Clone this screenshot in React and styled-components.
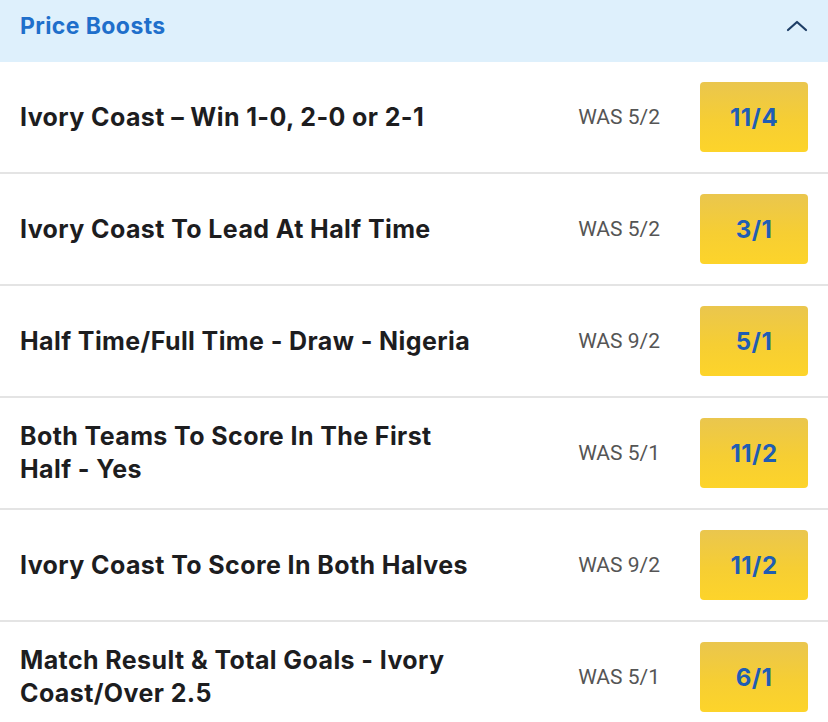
import React from "react";
import styled, { createGlobalStyle } from "styled-components";

const Global = createGlobalStyle`
  html, body { margin: 0; padding: 0; background: #ffffff; }
  body { font-family: Inter, "Noto Sans", sans-serif; -webkit-font-smoothing: antialiased; }
`;

const Panel = styled.section`
  width: 828px;
  background: #ffffff;
`;

const Header = styled.header`
  display: flex;
  align-items: center;
  justify-content: space-between;
  height: 62px;
  box-sizing: border-box;
  padding: 0 20px 10px 20px;
  background: #def0fc;
`;

const Title = styled.h2`
  margin: 0;
  font-family: Inter, sans-serif;
  font-weight: 700;
  font-size: 23px;
  line-height: 32px;
  color: #1f6fcb;
  letter-spacing: 0.4px;
`;

const Chevron = styled.svg`
  width: 22px;
  height: 14px;
`;

const Row = styled.div`
  display: flex;
  align-items: center;
  height: 112px;
  box-sizing: border-box;
  padding: 0 20px;
  border-bottom: 2px solid #e4e4e4;
`;

const Market = styled.div`
  flex: 1;
  min-width: 0;
`;

const MarketName = styled.div`
  max-width: 465px;
  font-family: Inter, sans-serif;
  font-weight: 700;
  font-size: 25px;
  line-height: 33px;
  color: #1d1d1f;
  letter-spacing: 0.4px;
`;

const Was = styled.div`
  font-family: Roboto, Inter, sans-serif;
  font-size: 21px;
  color: #555555;
  margin-right: 40px;
  white-space: nowrap;
`;

const Odds = styled.button`
  width: 108px;
  height: 70px;
  border: none;
  border-radius: 4px;
  background: linear-gradient(180deg, #eac64e 0%, #f6ce33 55%, #fdd42a 100%);
  font-family: Inter, sans-serif;
  font-weight: 700;
  font-size: 24px;
  color: #1f5db4;
  letter-spacing: 0.5px;
  padding: 0;
  cursor: pointer;
`;

const boosts = [
  { name: "Ivory Coast – Win 1-0, 2-0 or 2-1", was: "5/2", odds: "11/4" },
  { name: "Ivory Coast To Lead At Half Time", was: "5/2", odds: "3/1" },
  { name: "Half Time/Full Time - Draw - Nigeria", was: "9/2", odds: "5/1" },
  { name: "Both Teams To Score In The First Half - Yes", was: "5/1", odds: "11/2" },
  { name: "Ivory Coast To Score In Both Halves", was: "9/2", odds: "11/2" },
  { name: "Match Result & Total Goals - Ivory Coast/Over 2.5", was: "5/1", odds: "6/1" },
];

export default function App() {
  return (
    <>
      <Global />
      <Panel>
        <Header>
          <Title>Price Boosts</Title>
          <Chevron viewBox="0 0 22 14" fill="none">
            <path d="M2 11 L11 3 L20 11" stroke="#1e3e66" strokeWidth="2.2" strokeLinecap="round" strokeLinejoin="round" />
          </Chevron>
        </Header>
        {boosts.map((b) => (
          <Row key={b.name}>
            <Market>
              <MarketName>{b.name}</MarketName>
            </Market>
            <Was>WAS {b.was}</Was>
            <Odds>{b.odds}</Odds>
          </Row>
        ))}
      </Panel>
    </>
  );
}
